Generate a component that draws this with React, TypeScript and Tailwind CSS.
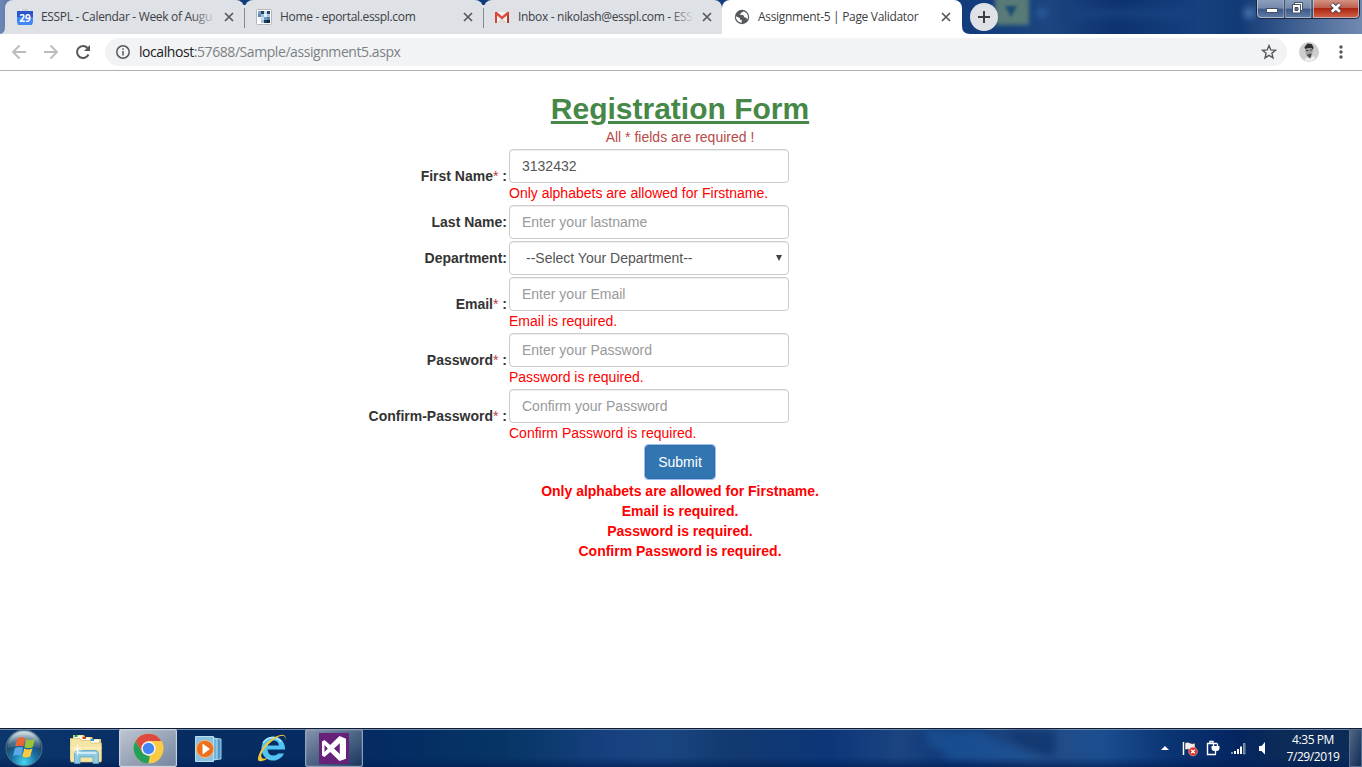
import React from "react";

const ui = "font-['Open_Sans','Noto_Sans',sans-serif]";

function Close() {
  return (
    <svg className="h-[10px] w-[10px] shrink-0" viewBox="0 0 10 10" stroke="#55595e" strokeWidth="1.7">
      <path d="M1 1l8 8M9 1l-8 8" />
    </svg>
  );
}

function CalendarIcon() {
  return (
    <svg className="h-4 w-4 shrink-0" viewBox="0 0 16 16">
      <path d="M2 0h12v3H2z" fill="#d0d3d8" />
      <path d="M0 2h16v6H0z" fill="#2a56c6" />
      <path d="M0 8h16v5l-1 3H1l-1-3z" fill="#4285f4" />
      <path d="M3 0h1.500v2H3zM11.500 0H13v2h-1.500z" fill="#f4f4f4" />
      <text x="8" y="12.500" textAnchor="middle" fontSize="10" fontWeight="700" fill="#fff" fontFamily="Open Sans, sans-serif">29</text>
    </svg>
  );
}

function PortalIcon() {
  const cells = [
    [2, 2, "#7fa3c6"], [5, 2, "#1e3f66"], [8, 2, "#c8dbec"], [2, 5, "#5d87b3"], [2, 8, "#eef4f9"],
    [5, 5, "#9fbfdc"], [8, 5, "#e3edf6"], [11, 2, "#24496f"], [11, 5, "#a9c5de"], [5, 8, "#c9dcee"],
    [8, 8, "#6d9bc6"], [5, 11, "#a2c2df"], [8, 11, "#1c3c61"], [11, 11, "#0f2540"], [11, 8, "#5a80a8"],
  ] as const;
  return (
    <svg className="h-4 w-4 shrink-0" viewBox="0 0 16 16">
      <rect x=".5" y=".5" width="15" height="15" rx="1" fill="#fff" stroke="#b4b6ba" />
      {cells.map(([x, y, c]) => <rect key={`${x}-${y}`} x={x} y={y} width="3" height="3" fill={c} />)}
    </svg>
  );
}

function GmailIcon() {
  return (
    <svg className="h-4 w-4 shrink-0" viewBox="0 0 16 16">
      <path d="M2 3h12v11H2z" fill="#f3f2f0" />
      <path d="M3 14l5-5 5 5z" fill="#dedcd9" />
      <path d="M2 3v11" stroke="#d64336" strokeWidth="2" />
      <path d="M14 3v11" stroke="#b8372c" strokeWidth="2" />
      <path d="M1.500 3.500L8 9l6.500-5.500" fill="none" stroke="#dd4b3e" strokeWidth="2.400" />
    </svg>
  );
}

function GlobeIcon() {
  return (
    <svg className="h-4 w-4 shrink-0" viewBox="0 0 16 16">
      <circle cx="8" cy="8" r="7.200" fill="#55595e" />
      <path d="M1.800 7.300l4 1.800.2 1.600 1.700.4v2.600c-3.200-.2-5.900-2.900-5.900-6.400zM9.300 2.200c-.2 1-1.300 1.300-2.400 1.500l-.3 1.800-1.700.6h4.300l1.200 2.200 2 .4.800 2.100c1.700-2.700 1-6.900-3.900-8.600z" fill="#fff" />
    </svg>
  );
}

function Tab({ icon, title, width, pad, active, fade }: {
  icon: React.ReactNode; title: string; width: string; pad: string; active?: boolean; fade?: boolean;
}) {
  return (
    <div className={`${width} ${pad} relative flex h-[34px] shrink-0 items-center rounded-t-lg ${active ? "bg-white" : "bg-[#dee1e6]"}`}>
      {icon}
      <div className="relative ml-2 h-[18px] min-w-0 flex-1 whitespace-nowrap text-[12px] leading-[18px] tracking-[-0.32px] text-[#3c4043]">
        {title}
        {fade && <span className="absolute right-0 top-0 h-full w-6 bg-linear-to-r from-transparent to-[#dee1e6]" />}
      </div>
      <div className="ml-2 flex"><Close /></div>
    </div>
  );
}

function TabDivider() {
  return (
    <svg className="-mx-1 h-[34px] w-[9px] shrink-0" viewBox="0 0 9 34">
      <path d="M0 5h9v29H0z" fill="#dee1e6" />
      <path d="M0 0h9Q5 1 4.500 4.500 4 1 0 0z" fill="#123c7c" />
      <path d="M4 8h1v20H4z" fill="#85888d" />
    </svg>
  );
}

function WindowButtons() {
  return (
    <svg className="absolute right-[1px] top-0 h-[20px] w-[105px]" viewBox="0 0 105 20">
      <defs>
        <linearGradient id="wb" x2="0" y2="1">
          <stop stopColor="#8fa2be" /><stop offset=".48" stopColor="#7388ac" /><stop offset=".5" stopColor="#3d5887" /><stop offset="1" stopColor="#6480aa" />
        </linearGradient>
        <linearGradient id="wr" x2="0" y2="1">
          <stop stopColor="#d59a8d" /><stop offset=".45" stopColor="#c0604e" /><stop offset=".5" stopColor="#ab2511" /><stop offset="1" stopColor="#d2644a" />
        </linearGradient>
      </defs>
      <path d="M.5-1v15.500q0 4 4 4h95q4 0 4-4V-1z" fill="url(#wb)" stroke="#1c2940" />
      <path d="M57-1v19h42q4 0 4-4V-1z" fill="url(#wr)" />
      <path d="M1.500-1v15q0 3.500 3.500 3.500h23V-1M29.500-1v18.500H55V-1M57.500-1v18.500H99q3.500 0 3.500-3.500V-1" fill="none" stroke="#c1cbdc" strokeOpacity=".75" />
      <path d="M28.800 0v18M56 0v18" stroke="#26344d" />
      <rect x="10.500" y="8.500" width="11" height="4" fill="#fff" stroke="#474f62" />
      <path d="M38.500 2.500h8v8h-8z" fill="#fff" stroke="#474f62" />
      <path d="M36.500 4.500h8v8.500h-8z" fill="#fff" stroke="#474f62" />
      <path d="M39 7.500h3v3h-3z" fill="#5f7399" stroke="#474f62" />
      <path d="M75.500 4l8.500 8M84 4l-8.500 8" stroke="#4b4354" strokeWidth="4.600" />
      <path d="M75.800 4.200l8 7.600M83.800 4.200l-8 7.600" stroke="#fff" strokeWidth="2.800" />
    </svg>
  );
}

function TabStrip() {
  return (
    <header className="relative flex h-[34px] shrink-0 overflow-hidden bg-[linear-gradient(90deg,#6c86b4_0%,#163f80_5%,#123c7c_72%,#1d4680_77%,#0d326f_82%,#15417e_88%,#123a76_91%,#52709d_97%,#7189b0_100%)] pl-[5px]">
      <div className="absolute right-[333px] top-[-4px] h-[29px] w-[34px] bg-[#587b77] blur-[2px]" />
      <svg className="absolute left-[1003px] top-[4px] h-[14px] w-[16px] blur-[1.5px]" viewBox="0 0 16 14"><path d="M2 2h12l-6 11z" fill="#1c4c70" /></svg>
      <div className="absolute left-[1037px] top-[8px] h-[10px] w-[10px] rounded-full bg-[#2c5b9b] blur-[3px]" />
      <div className="absolute left-[1068px] top-[10px] h-[7px] w-[120px] bg-[#1a4583] blur-[4px]" />
      <div className="absolute left-[1244px] top-[8px] h-[10px] w-[11px] bg-[#4670a8] blur-[3px]" />
      <svg className="absolute left-0 top-[26px] h-2 w-[6px]" viewBox="0 0 6 8"><path d="M0 8q5 0 5-8h1v8z" fill="#dee1e6" /></svg>
      <Tab icon={<CalendarIcon />} title="ESSPL - Calendar - Week of Augu" width="w-[239px]" pad="pl-3 pr-[10px]" fade />
      <TabDivider />
      <Tab icon={<PortalIcon />} title="Home - eportal.esspl.com" width="w-[238px]" pad="pl-[11px] pr-[10px]" />
      <TabDivider />
      <Tab icon={<GmailIcon />} title="Inbox - nikolash@esspl.com - ESS" width="w-[238px]" pad="pl-[10px] pr-[10px]" fade />
      <div className="-ml-2 h-[34px] w-2 shrink-0 bg-[linear-gradient(#dee1e6,#dee1e6)_0_8px/8px_26px_no-repeat]">
        <svg className="h-[34px] w-2" viewBox="0 0 8 34"><path d="M0 34q8 0 8-8v8z" fill="#fff" /></svg>
      </div>
      <Tab icon={<GlobeIcon />} title="Assignment-5 | Page Validator" width="w-[240px]" pad="pl-3 pr-[11px]" active />
      <svg className="h-[34px] w-2" viewBox="0 0 8 34"><path d="M0 26q0 8 8 8H0z" fill="#fff" /></svg>
      <button className="relative mt-[3px] flex h-7 w-7 items-center justify-center rounded-full bg-[#dee1e6]">
        <svg className="h-3 w-3" viewBox="0 0 12 12" stroke="#3c4043" strokeWidth="2"><path d="M6 0v12M0 6h12" /></svg>
      </button>
      <WindowButtons />
    </header>
  );
}

function Toolbar() {
  return (
    <div className="flex h-[37px] shrink-0 items-center border-b border-[#b2b2b4] bg-white pl-[11px]">
      <svg className="h-4 w-[80px]" viewBox="0 0 80 16" fill="none" stroke="#b9bbbd" strokeWidth="1.800">
        <path d="M15 8H2M8.500 1.500L2 8l6.500 6.500M33 8h13M39.500 1.500L46 8l-6.500 6.500" />
        <path d="M77.500 10.500A6 6 0 1 1 76.500 4" stroke="#54585d" strokeWidth="2" />
        <path d="M79 1v6h-6z" fill="#54585d" stroke="none" />
      </svg>
      <div className="ml-[14px] flex h-7 w-[1182px] items-center rounded-full bg-[#f1f3f4] pl-[11px] pr-[10px]">
        <svg className="h-[14px] w-[14px]" viewBox="0 0 14 14" fill="none" stroke="#55595e" strokeWidth="1.500">
          <circle cx="7" cy="7" r="6.200" /><path d="M7 6v4.500M7 3.200v1.600" />
        </svg>
        <span className="ml-[9px] whitespace-nowrap text-[14px] leading-5 tracking-[-0.43px] text-[#7c8186]"><span className="text-[#202124]">localhost</span>:57688/Sample/assignment5.aspx</span>
        <svg className="ml-auto h-4 w-4" viewBox="0 0 16 16" fill="none" stroke="#54585d" strokeWidth="1.400">
          <path d="M8 1.600l1.800 4.300 4.700.4-3.600 3 1.100 4.600L8 11.400l-4 2.500 1.100-4.600-3.600-3 4.700-.4z" />
        </svg>
      </div>
      <svg className="ml-3 h-5 w-5" viewBox="0 0 20 20">
        <circle cx="10" cy="10" r="10" fill="#cecece" />
        <path d="M5.500 5l3-3.500 4 .5 2 3-.5 3-2-2-6 1z" fill="#303030" />
        <path d="M6 7l6-1 2 2-1 5-3 4-3-4z" fill="#a0a0a0" />
        <path d="M7 8.500h2.500M11 8h2M8.500 13l3.500-1-1 3.500z" stroke="#444" strokeWidth="1" fill="#555" />
        <path d="M5 18l3-3 3 2 3-3 2.500 2-3 2.500-4 1z" fill="#efefef" />
      </svg>
      <svg className="ml-5 h-4 w-1" viewBox="0 0 4 16" fill="#54585d"><circle cx="2" cy="3" r="1.700" /><circle cx="2" cy="8" r="1.700" /><circle cx="2" cy="13" r="1.700" /></svg>
    </div>
  );
}

const fieldBox = "block h-[34px] w-[280px] rounded-[4px] border border-[#ccc] bg-white px-3 text-[14px] text-[#555] shadow-[inset_0_1px_1px_rgba(0,0,0,0.075)] placeholder:text-[#999] outline-none";

function Row({ label, required, error, children }: { label: string; required?: boolean; error?: string; children: React.ReactNode }) {
  return (
    <div className="flex items-center gap-[2px]">
      <label className="w-[507px] text-right font-bold text-[#333]">
        {label}{required && <><span className="font-normal text-[#c23b38]">*</span> :</>}
      </label>
      <div>
        {children}
        {error && <div className="h-5 text-[#f00]">{error}</div>}
      </div>
    </div>
  );
}

function Form() {
  return (
    <main className="flex-1 bg-white pt-[20px] font-['Liberation_Sans',Arial,sans-serif] text-[14px] leading-5">
      <div className="w-[1360px] text-center">
        <h2 className="pb-px text-[30px] font-bold leading-[35px] text-[#468847] underline">Registration Form</h2>
        <p className="text-[#b94a48]">All * fields are required !</p>
      </div>
      <form className="mt-[2px] flex flex-col gap-[2px]" onSubmit={(e) => e.preventDefault()}>
        <Row label="First Name" required error="Only alphabets are allowed for Firstname."><input className={fieldBox} defaultValue="3132432" /></Row>
        <Row label="Last Name:"><input className={fieldBox} placeholder="Enter your lastname" /></Row>
        <Row label="Department:">
          <div className="flex h-[34px] w-[280px] items-center justify-between rounded-[4px] border border-[#ccc] pl-4 pr-[6px] text-[#555] shadow-[inset_0_1px_1px_rgba(0,0,0,0.075)]">
            --Select Your Department--
            <svg className="h-[6px] w-[6px]" viewBox="0 0 6 6"><path d="M0 0h6L3 6z" fill="#444" /></svg>
          </div>
        </Row>
        <Row label="Email" required error="Email is required."><input className={fieldBox} placeholder="Enter your Email" /></Row>
        <Row label="Password" required error="Password is required."><input className={fieldBox} placeholder="Enter your Password" /></Row>
        <Row label="Confirm-Password" required error="Confirm Password is required."><input className={fieldBox} placeholder="Confirm your Password" /></Row>
        <div className="flex w-[1360px] justify-center">
          <button className="h-[34px] w-[70px] rounded-[3px] border border-[#2e6da4] bg-[#3276b1] text-white outline-1 outline-[#a0c0f5]">Submit</button>
        </div>
      </form>
      <div className="mt-[2px] w-[1360px] text-center font-bold text-[#f00]">
        <p>Only alphabets are allowed for Firstname.</p>
        <p>Email is required.</p>
        <p>Password is required.</p>
        <p>Confirm Password is required.</p>
      </div>
    </main>
  );
}

function StartOrb() {
  return (
    <svg className="ml-[5px] h-[38px] w-[38px]" viewBox="0 0 38 38">
      <defs>
        <radialGradient id="orb" cx=".5" cy=".9" r=".85"><stop stopColor="#46d6ef" /><stop offset=".4" stopColor="#1974a8" /><stop offset=".75" stopColor="#1d4165" /><stop offset="1" stopColor="#8ea9b9" /></radialGradient>
        <linearGradient id="shine" x2="0" y2="1"><stop stopColor="#e8f2f5" stopOpacity=".8" /><stop offset="1" stopColor="#7b9fb4" stopOpacity=".25" /></linearGradient>
      </defs>
      <circle cx="19" cy="19" r="18" fill="url(#orb)" stroke="#4f7385" />
      <path d="M2.500 19a16.500 16.500 0 0 1 33 0q-16-5-33 0z" fill="url(#shine)" />
      <path d="M12.300 9.500q3.800-2.200 7.800-.2l-1.800 8.200q-3.900-1.500-8 .2z" fill="#ed6531" />
      <path d="M21.300 10q4 1.800 8.700 0l-2.300 8.200q-4.200 1.800-8.200 0z" fill="#9bc43b" />
      <path d="M10 19q4-1.900 8-.2l-1.900 8q-3.900-1.600-8.100.4z" fill="#5ba9e6" />
      <path d="M19.300 19.600q4 1.800 8.100 0l-2.200 7.900q-4.100 1.900-7.900.1z" fill="#fbcb42" />
    </svg>
  );
}

function ExplorerIcon() {
  return (
    <svg className="h-8 w-8" viewBox="0 0 32 32">
      <path d="M3 5V2h11l1 2h7l1 2h8v8H3z" fill="#e8cf7b" />
      <path d="M4 2.500h8v4H4zM12 4.500h8v4h-8zM20 6.500h9v4h-9z" fill="#fffef0" />
      <path d="M4.500 3h3" stroke="#16a832" strokeWidth="2" /><path d="M12.500 5h3.500" stroke="#d13a2a" strokeWidth="2" /><path d="M20.500 7h3.500" stroke="#2b91d8" strokeWidth="2" />
      <path d="M0 5.500h10l1.500 2h8l1.500 2.500h10.500V27L31 29H1L0 26z" fill="#f5e6a6" stroke="#d4bd6e" strokeWidth=".7" />
      <path d="M.5 15h31" stroke="#fdf5cb" />
      <path d="M4.500 30.500V21q0-3.500 3.500-3.500h17q3.500 0 3.500 3.500v9.500H23V24H10v6.500z" fill="#8fcae3" stroke="#5ca4c7" strokeWidth=".8" />
      <path d="M6.500 20h20" stroke="#cdebf6" strokeWidth="2" />
      <path d="M7.500 11.500v11M3 17h9M5 14l5 6M10 14l-5 6" stroke="#fff" strokeWidth=".8" strokeOpacity=".9" />
    </svg>
  );
}

function ChromeIcon() {
  return (
    <svg className="h-[31px] w-[31px]" viewBox="0 0 48 48">
      <circle cx="24" cy="24" r="23" fill="#fbcb43" />
      <path d="M4.080 12.500A23 23 0 0 1 43.920 12.500H24L14.040 29.750z" fill="#dc4b3e" />
      <path d="M4.080 12.500L14.040 29.750 24 35.500l2-.3L24 47A23 23 0 0 1 4.080 12.500z" fill="#25a05a" />
      <path d="M24 12.500h19.920A23 23 0 0 1 24 47l9.960-17.250z" fill="#fbcb43" />
      <circle cx="24" cy="24" r="11.200" fill="#f4f4f4" /><circle cx="24" cy="24" r="8.800" fill="#4285f4" />
    </svg>
  );
}

function MediaIcon() {
  return (
    <svg className="h-[26px] w-[27px]" viewBox="0 0 27 26">
      <path d="M7 1l19 2v20L7 25z" fill="#4e96c5" stroke="#a4d0e8" /><path d="M4 1l18 1.500v21L4 25z" fill="#74b3d9" stroke="#b5daeb" />
      <path d="M.5.500h18v25H.5z" fill="#8dc2df" stroke="#b9deed" />
      <circle cx="10" cy="13" r="8.600" fill="#ec701c" stroke="#f8b67f" /><path d="M7.500 7.500v11l7.500-5.500z" fill="#fff" />
    </svg>
  );
}

function IeIcon() {
  return (
    <svg className="h-8 w-8" viewBox="0 0 32 32">
      <path fillRule="evenodd" d="M28 21.500A11.800 12 0 1 1 29 17.500H11.500q.5 6 6 6 3.500 0 4.700-2zM11.700 13.500h11.300q-.8-5-5.700-5t-5.600 5z" fill="#52c4f3" />
      <path d="M7 11q3-5 9-5.500 6 0 9 4" fill="none" stroke="#b0eafc" strokeWidth="1.600" />
      <path d="M29.500 9Q31-.5 20 4.500 9 10 4 20q-5 11 2 9 4-1 8-4-6 3-8 1-2.500-3 3-10Q16 8 23 4.500q7-3 6.500 4.500z" fill="#f3c735" />
    </svg>
  );
}

function StudioIcon() {
  return (
    <svg className="h-[31px] w-[30px]" viewBox="0 0 30 31">
      <path d="M0 0h30v31H0z" fill="#672178" />
      <path fillRule="evenodd" d="M20.500 3L27 5.700v20L20.500 28l-9.300-9L5.500 24 3 22.500v-14L5.500 7l5.700 5zM20.800 10.300l-5.800 5.300 5.800 5.300zM5.500 12v7l3.300-3.400z" fill="#fff" />
    </svg>
  );
}

function TrayIcons() {
  return (
    <svg className="h-[18px] w-[112px]" viewBox="0 0 112 18">
      <path d="M4 11L8 7l4 4z" fill="#fff" />
      <path d="M26.500 3v13" stroke="#fff" strokeWidth="1.500" /><path d="M28 4q2.500-1.500 5 0t5 0v7q-3 1.500-5 0t-5 0z" fill="#eee" stroke="#222" strokeWidth=".5" />
      <circle cx="36" cy="12.500" r="4.300" fill="#d92b22" stroke="#f0a6a0" strokeWidth=".8" /><path d="M34.200 10.700l3.600 3.600M37.800 10.700l-3.600 3.600" stroke="#fff" strokeWidth="1.500" />
      <path d="M59 15.500h-8.500v-11h9.500M53 4V2.500h3V4" fill="none" stroke="#fff" strokeWidth="1.400" />
      <path d="M54.500 7h8v2q0 3-3 3h-2q-3 0-3-3z" fill="#fff" />
      <path d="M56.500 7.500V4.500M60.500 7.500V4.500M58.500 12v3" fill="none" stroke="#fff" strokeWidth="1.300" />
      <path d="M74.500 13h1v2h-1zM77 12h2v3h-2zM80 10h2v5h-2z" fill="#fff" />
      <path d="M83 7.500h2V15h-2z" fill="#fff" /><path d="M86.500 4.500h1.500V15h-1.500z" fill="#3d5372" stroke="#b9c3d1" strokeWidth=".7" />
      <path d="M102 7h2.500L108 3v12.500L104.500 12H102z" fill="#fff" />
    </svg>
  );
}

function Taskbar() {
  const selected = "flex h-[38px] w-[58px] items-center justify-center rounded-[2px] border shadow-[inset_0_0_1px_#fff]";
  return (
    <footer className="relative flex h-[39px] shrink-0 items-center overflow-hidden border-t border-[#101c31] bg-[linear-gradient(90deg,#0b376d_0%,#082d62_12%,#042b63_27%,#063565_37%,#174180_45%,#194580_49%,#123970_54%,#0c3679_61%,#1b4480_66%,#0d3878_70%,#254b83_76%,#1b4e90_81%,#0a3473_86%,#042560_91%,#0c2b57_94%,#0c2b57_100%)]">
      <div className="absolute inset-x-0 top-0 h-px bg-[#6f89ac]" />
      <svg className="absolute left-[915px] top-[1px] h-9 w-[160px] blur-[4px]" viewBox="0 0 160 36"><path d="M10 0h55q35 25 85 33H35L15 18z" fill="#1d559a" fillOpacity=".7" /><path d="M17 16l18 10-15 6z" fill="#123875" fillOpacity=".7" /><path d="M90 0h50v28q-35-7-50-28z" fill="#082d68" fillOpacity=".6" /></svg>
      <div className="absolute inset-x-0 bottom-0 h-[10px] bg-linear-to-b from-transparent to-[#001f57]/70" />
      <div className="relative flex h-full w-full items-center">
        <StartOrb />
        <div className="ml-[27px] mt-[1px]"><ExplorerIcon /></div>
        <div className={`${selected} ml-[17px] border-[#cbd3df] bg-linear-to-br from-[#bec5d1] to-[#75869f]`}><ChromeIcon /></div>
        <div className="ml-[18px] mt-[2px]"><MediaIcon /></div>
        <div className="ml-[34px]"><IeIcon /></div>
        <div className={`${selected} ml-[17px] border-[#8d9eb9] bg-linear-to-br from-[#8594ac] to-[#19375f]`}><StudioIcon /></div>
        <div className="ml-auto mr-[17px]"><TrayIcons /></div>
        <div className="mr-[9px] w-[54px] whitespace-nowrap text-center text-[12px] leading-[17px] tracking-[-0.42px] text-white"><div>4:35 PM</div><div>7/29/2019</div></div>
        <div className="h-full w-[13px] border border-[#566e91] bg-linear-to-br from-[#536782] to-[#102e59]" />
      </div>
    </footer>
  );
}

export default function App() {
  return (
    <div className={`flex h-[767px] w-[1362px] flex-col overflow-hidden bg-white ${ui}`}>
      <TabStrip />
      <Toolbar />
      <Form />
      <Taskbar />
    </div>
  );
}
